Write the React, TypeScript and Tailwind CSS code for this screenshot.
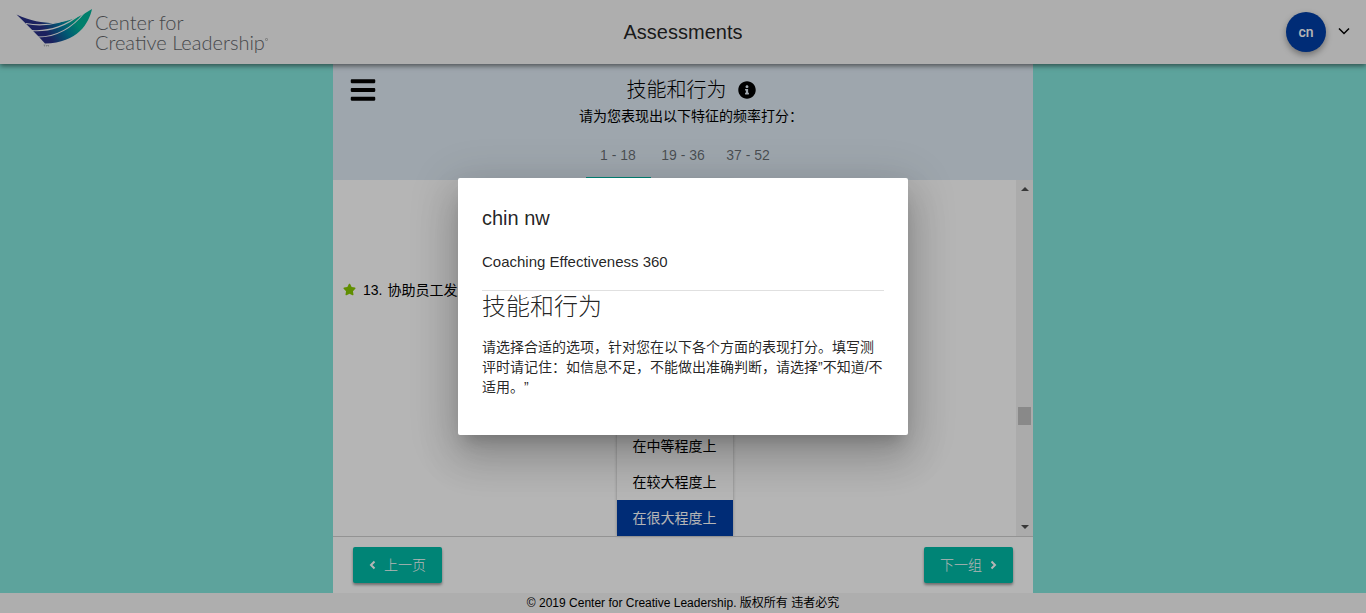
import { useState } from "react";
import { FaBars, FaInfoCircle, FaStar } from "react-icons/fa";

const ranges = ["1 - 18", "19 - 36", "37 - 52"];
const answers = ["在中等程度上", "在较大程度上", "在很大程度上"];

function Logo() {
  return (
    <a href="#home" aria-label="Center for Creative Leadership" className="flex items-start gap-[3px]">
      <svg viewBox="0 0 76 38" className="h-[38px] w-[76px] shrink-0" aria-hidden="true">
        <defs>
          <linearGradient id="wing" x1="0" x2="1" y1="0.3" y2="0">
            <stop offset="0.25" stopColor="#282f86" />
            <stop offset="0.5" stopColor="#007fa3" />
            <stop offset="0.7" stopColor="#00b398" />
          </linearGradient>
        </defs>
        <path d="M0.5 5.5 C14 12 27 14 38 14 C52 13 64 8 76 0 C73 14 62 34 29 34.5 C20 24 10 15 0.5 5.5Z" fill="url(#wing)" />
        <g fill="none" stroke="#f5f5f5" strokeWidth="1.1">
          <path d="M10 14.500 C28 18 46 14 61 5.500" />
          <path d="M16 21.500 C34 23 52 16 65 4.500" />
          <path d="M22 28 C41 28 57 18 69 3" />
        </g>
        <path d="M27.500 36 h2 m-1 0 v1.600 m2 0 v-1.600 l1 1 l1 -1 v1.600" fill="none" stroke="#75787b" strokeWidth="0.4" />
      </svg>
      <span className="flex flex-col pt-[3px] font-['Lato',sans-serif] text-[20px] leading-5 font-light text-[#63666a]">
        <span>Center for</span>
        <span className="flex">
          Creative Leadership
          <svg viewBox="0 0 4 4" className="mt-[6px] size-[3px]" fill="none" stroke="currentColor" strokeWidth="0.6" aria-hidden="true">
            <circle cx="2" cy="2" r="1.500" />
          </svg>
        </span>
      </span>
    </a>
  );
}

function Chevron({ d, className }: { d: string; className: string }) {
  return (
    <svg viewBox="0 0 12 12" className={className} fill="none" stroke="currentColor" aria-hidden="true">
      <path d={d} />
    </svg>
  );
}

export default function App() {
  const [range, setRange] = useState(0);
  const [answer, setAnswer] = useState(2);
  return (
    <div className="relative flex h-screen flex-col overflow-hidden bg-[#83e6dc] font-['Liberation_Sans','Noto_Sans_CJK_SC',sans-serif] text-sm text-black [text-spacing-trim:space-all]">
      <header className="z-10 grid h-16 shrink-0 grid-cols-3 bg-[#f5f5f5] shadow-[0_2px_5px_rgba(0,0,0,0.5)]">
        <div className="pt-[9px] pl-4">
          <Logo />
        </div>
        <h1 className="self-center text-center text-xl text-black/87">Assessments</h1>
        <div className="flex items-center justify-end gap-3 pr-4">
          <button className="size-10 rounded-full bg-[#003ea6] font-['Roboto',sans-serif] text-sm font-medium text-white shadow-[0_3px_6px_rgba(0,0,0,0.35)]">
            cn
          </button>
          <button aria-label="Account menu">
            <Chevron d="M1 2.5 L6 7.5 L11 2.5" className="size-3 stroke-[1.5]" />
          </button>
        </div>
      </header>

      <main className="mx-auto flex min-h-0 w-full max-w-[700px] flex-1 flex-col bg-white">
        <div className="grid h-[116px] shrink-0 grid-cols-[60px_1fr_60px] bg-[#dfeaf4]">
          <button aria-label="Menu" className="flex h-[52px] items-center justify-center">
            <FaBars className="size-7" />
          </button>
          <div className="flex flex-col items-center pt-3">
            <h2 className="flex items-center gap-[11px] pl-4 text-xl leading-7 font-light">
              技能和行为
              <FaInfoCircle className="size-[18px]" />
            </h2>
            <p className="pl-4 leading-6">请为您表现出以下特征的频率打分：</p>
            <div role="tablist" className="mt-auto mb-px flex">
              {ranges.map((label, i) => (
                <button
                  key={label}
                  role="tab"
                  aria-selected={range === i}
                  onClick={() => setRange(i)}
                  className={`h-[46px] w-[65px] border-b-2 text-sm text-black/55 ${range === i ? "border-[#00baa6]" : "border-transparent"}`}
                >
                  {label}
                </button>
              ))}
            </div>
          </div>
        </div>

        <div className="flex min-h-0 flex-1">
          <div className="flex min-w-0 flex-1 items-stretch">
            <div className="flex flex-1 items-start gap-[7px] pt-[100px] pl-[10px]">
              <FaStar className="mt-[3px] size-[13px] text-[#88c800]" />
              <p className="flex gap-[5px] leading-5">
                <span>13.</span>
                <span>协助员工发展</span>
              </p>
            </div>
            <div role="listbox" aria-label="评分" className="flex w-[116px] flex-col justify-end shadow-[0_0_3px_rgba(0,0,0,0.3)]">
              {answers.map((label, i) => (
                <button
                  key={label}
                  role="option"
                  aria-selected={answer === i}
                  onClick={() => setAnswer(i)}
                  className={`h-9 ${answer === i ? "bg-[#003ea6] text-white" : "bg-white"}`}
                >
                  {label}
                </button>
              ))}
            </div>
            <div className="flex-1 pr-[10px]" />
          </div>
          <div className="flex w-[17px] flex-col items-center justify-between bg-[#f1f1f1] py-[7px]">
            <svg viewBox="0 0 8 4" className="h-1 w-2" aria-hidden="true">
              <path d="M0 4 L4 0 L8 4Z" fill="#505050" />
            </svg>
            <div className="mt-[216px] mb-auto h-[18px] w-[13px] bg-[#c1c1c1]" />
            <svg viewBox="0 0 8 4" className="h-1 w-2" aria-hidden="true">
              <path d="M0 0 L4 4 L8 0Z" fill="#505050" />
            </svg>
          </div>
        </div>

        <div className="flex h-[57px] shrink-0 items-start justify-between border-t border-[#d0d0d0] px-5 pt-[10px]">
          <button className="flex h-9 items-center gap-1 rounded-xs bg-[#00baa6] pr-4 pl-[15px] font-light text-white shadow-[0_2px_3px_rgba(0,0,0,0.4)]">
            <Chevron d="M6.5 2.500 L3 6 L6.5 9.500" className="size-3 stroke-2" />
            上一页
          </button>
          <button className="flex h-9 items-center gap-1 rounded-xs bg-[#00baa6] pr-[15px] pl-4 font-light text-white shadow-[0_2px_3px_rgba(0,0,0,0.4)]">
            下一组
            <Chevron d="M5.5 2.500 L9 6 L5.5 9.500" className="size-3 stroke-2" />
          </button>
        </div>
      </main>

      <footer className="h-5 shrink-0 bg-[#f5f5f5] text-center text-xs leading-5">
        © 2019 Center for Creative Leadership. 版权所有 违者必究
      </footer>

      <div className="absolute inset-0 z-20 flex items-center justify-center bg-black/29">
        <section
          role="dialog"
          aria-modal="true"
          aria-labelledby="dialog-title"
          className="w-[450px] rounded-xs bg-white px-6 pt-6 pb-[38px] text-black/87 shadow-[0_11px_15px_-7px_rgba(0,0,0,0.2),0_24px_38px_3px_rgba(0,0,0,0.14),0_9px_46px_8px_rgba(0,0,0,0.12)]"
        >
          <h2 id="dialog-title" className="text-xl leading-8">chin nw</h2>
          <p className="mt-[18px] text-[15px] leading-5">Coaching Effectiveness 360</p>
          <hr className="mt-[18px] border-black/12" />
          <h3 className="text-2xl leading-8 font-light">技能和行为</h3>
          <p className="mt-[14px] leading-5">
            请选择合适的选项，针对您在以下各个方面的表现打分。填写测评时请记住：如信息不足，不能做出准确判断，请选择”不知道/不适用。”
          </p>
        </section>
      </div>
    </div>
  );
}
